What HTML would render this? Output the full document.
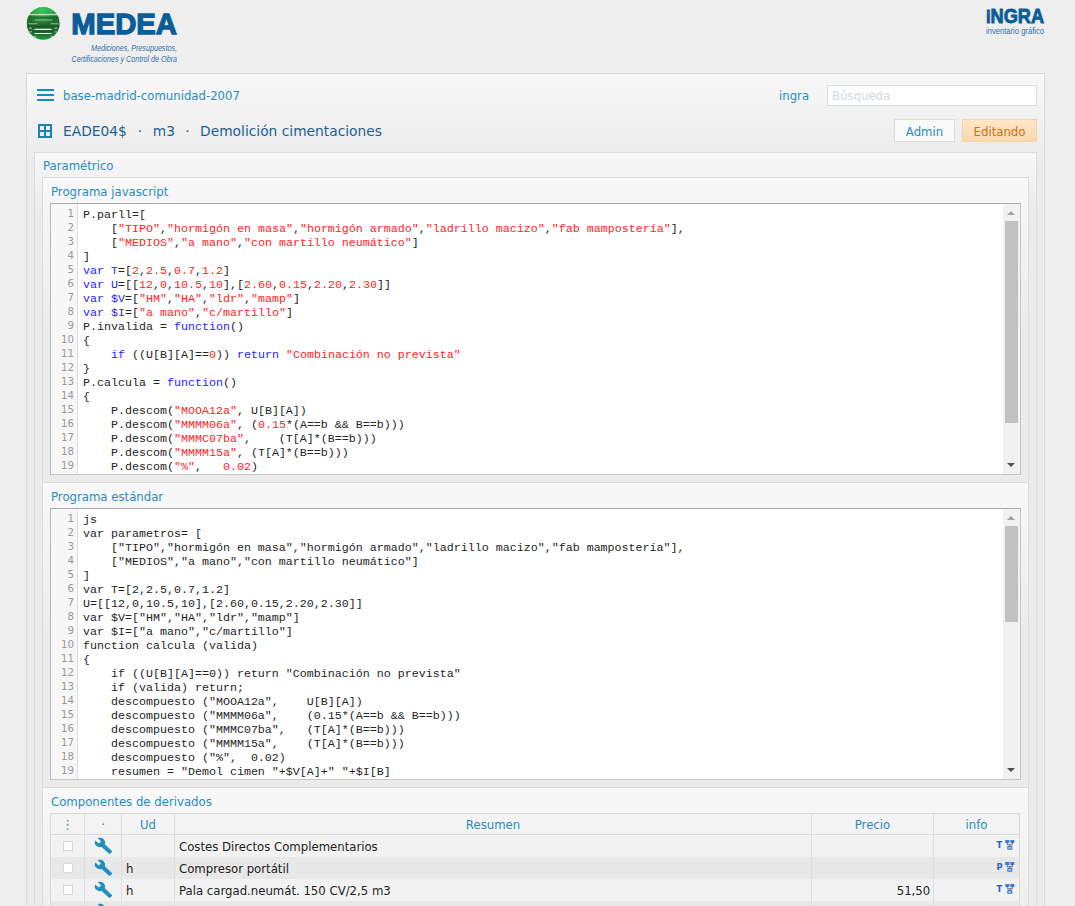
<!DOCTYPE html>
<html lang="es"><head><meta charset="utf-8"><title>MEDEA</title>
<style>
*{box-sizing:border-box}
html,body{margin:0;padding:0}
body{width:1075px;height:906px;overflow:hidden;background:#eeeeee;position:relative;font-family:"DejaVu Sans","Liberation Sans",sans-serif;font-size:13px;color:#222}
i{font-style:normal}
.abs{position:absolute}
#main{position:absolute;left:26px;top:73px;width:1019px;height:900px;border:1px solid #dadada;background:#ebebeb linear-gradient(#f8f8f8,#ebebeb) no-repeat;background-size:100% 85px}
#param{position:absolute;left:34px;top:152px;width:1003px;height:900px;border:1px solid #dcdcdc;background:#ebebeb linear-gradient(#f7f7f7,#ebebeb) no-repeat;background-size:100% 60px}
.fs{position:absolute;left:42px;width:987px;height:306px;border:1px solid #dcdcdc;border-bottom:none;background:#ebebeb linear-gradient(#f8f8f8,#ebebeb) no-repeat;background-size:100% 150px}
.lbl{position:absolute;color:#2a8cbc;white-space:nowrap;line-height:16px;transform:scaleX(.9);transform-origin:0 50%}
.lbl.c{text-align:center;transform-origin:50% 50%}
.ed{position:absolute;left:50px;width:971px;height:272px;background:#fff;border:1px solid #c6c6c6;border-top-color:#ababab;border-left-color:#b8b8b8;overflow:hidden}
.gut{position:absolute;left:0;top:0;width:27px;height:270px;background:#f7f7f7;border-right:1px solid #dddddd;padding-top:3px;text-align:right;padding-right:3px;color:#999;font-size:11px;line-height:14px}
.gut div{height:14px;transform:scaleX(.93);transform-origin:100% 50%}
.code{position:absolute;left:32px;top:4px;margin:0;font-family:"Liberation Mono",monospace;font-size:11.67px;line-height:14px;color:#242424;white-space:pre}
.code .s{color:#ff2424}
.code .k{color:#2424ff}
.code .d{color:#2424ff}
.sb{position:absolute;right:0;top:0;width:17px;height:270px;background:#f1f1f1}
.th{position:absolute;left:2px;top:17px;width:13px;background:#c1c1c1}
.au{position:absolute;left:4px;top:6.500px;width:0;height:0;border-left:4px solid transparent;border-right:4px solid transparent;border-bottom:4.500px solid #a3a3a3}
.ad{position:absolute;left:4px;bottom:7.500px;width:0;height:0;border-left:4px solid transparent;border-right:4px solid transparent;border-top:4.500px solid #505050}
#tbl{position:absolute;left:50px;top:813px;width:970px;height:100px;border:1px solid #d8d8d8;border-bottom:none;background:#f3f3f3}
.hd{position:absolute;top:815px;height:20px;line-height:20px;color:#2a8cbc;text-align:center;white-space:nowrap;transform:scaleX(.9)}
.vl{position:absolute;top:814px;width:1px;height:100px;background:#dedede}
.row{position:absolute;left:51px;width:968px;height:22px;line-height:22px;white-space:nowrap}
.r0{background:#f2f2f2}
.r1{background:#e8e8e8}
.cb{position:absolute;left:12px;top:6px;width:10px;height:10px;background:#fff;border:1px solid #d9d9d9}
.wr{position:absolute;left:42.900px;top:2.100px;width:19px;height:17.600px;fill:#2090c0}
.ud{position:absolute;left:75px;top:1px;transform:scaleX(.9);transform-origin:0 50%}
.res{position:absolute;left:128px;top:1px;transform:scaleX(.9);transform-origin:0 50%}
.pr{position:absolute;right:89px;top:1px;transform:scaleX(.9);transform-origin:100% 50%}
.ty{position:absolute;left:944.500px;top:-1px;font-weight:bold;font-size:9.500px;color:#2a5fc0;transform:scaleX(.88);transform-origin:50% 50%}
.tr{position:absolute;left:954px;top:5px;width:10px;height:10px}
.vl2{position:absolute;top:0;width:1px;height:22px;background:#dedede}
</style></head><body>

<!-- MEDEA logo -->
<svg class="abs" style="left:20px;top:0" width="180" height="70" viewBox="0 0 180 70">
<defs>
<linearGradient id="gg" x1="0" y1="0" x2="0" y2="1"><stop offset="0" stop-color="#2fae4a"/><stop offset="0.220" stop-color="#27a043"/><stop offset="0.260" stop-color="#1f7a32"/><stop offset="0.550" stop-color="#1d682b"/><stop offset="0.850" stop-color="#1f7430"/><stop offset="1" stop-color="#2a9a42"/></linearGradient>
<radialGradient id="gh" cx="0.450" cy="0.180" r="0.400"><stop offset="0" stop-color="#4cc765" stop-opacity="0.700"/><stop offset="1" stop-color="#4cc765" stop-opacity="0"/></radialGradient>
<clipPath id="gc"><circle cx="23.200" cy="23.400" r="16.400"/></clipPath>
</defs>
<circle cx="23.200" cy="23.400" r="16.400" fill="url(#gg)"/>
<circle cx="23.200" cy="23.400" r="16.400" fill="url(#gh)"/>
<g clip-path="url(#gc)" stroke-linecap="round" fill="none">
<path d="M6 17.600h35" stroke="#195c26" stroke-width="1.600" opacity="0.700"/>
<path d="M6 26.500h35" stroke="#17531f" stroke-width="2.200" opacity="0.800"/>
<path d="M6 31.500h35" stroke="#17531f" stroke-width="1.400" opacity="0.700"/>
<path d="M6 14.700h35" stroke="#f4f8f4" stroke-width="0.900"/>
<path d="M15 20h17" stroke="#86c391" stroke-width="0.900"/>
<path d="M9 23.800h8M31 23.800h7" stroke="#b9dcc0" stroke-width="0.800"/>
<path d="M15 29.400h16" stroke="#eaf4ec" stroke-width="1.100"/>
<path d="M9.500 28h2M9.500 31.800h2M35 28h2M35 31.800h2" stroke="#cfe6d3" stroke-width="0.800"/>
<path d="M15 33.500h16" stroke="#eaf4ec" stroke-width="1"/>
<path d="M13 36.800h3M31 36.800h3" stroke="#cfe6d3" stroke-width="0.800"/>
</g>
<text x="51.300" y="34.350" font-family="Liberation Sans, sans-serif" font-weight="bold" font-size="29.700" fill="#0b5d98" stroke="#0b5d98" stroke-width="1.300" textLength="105.600" lengthAdjust="spacingAndGlyphs">MEDEA</text>
<text x="71" y="51.300" font-family="Liberation Sans, sans-serif" font-style="italic" font-size="8.600" fill="#2f72a8" textLength="86" lengthAdjust="spacingAndGlyphs">Mediciones, Presupuestos,</text>
<text x="51.500" y="62" font-family="Liberation Sans, sans-serif" font-style="italic" font-size="8.600" fill="#2f72a8" textLength="105.500" lengthAdjust="spacingAndGlyphs">Certificaciones y Control de Obra</text>
</svg>

<!-- INGRA logo -->
<svg class="abs" style="left:980px;top:0" width="70" height="42" viewBox="0 0 70 42">
<text x="6" y="23" font-family="Liberation Sans, sans-serif" font-weight="bold" font-size="20" fill="#0b5d98" stroke="#0b5d98" stroke-width="0.900" textLength="58" lengthAdjust="spacingAndGlyphs"><tspan font-size="18.200">i</tspan>NGRA</text>
<text x="6" y="34" font-family="Liberation Sans, sans-serif" font-size="9.300" fill="#2f70a6" textLength="58" lengthAdjust="spacingAndGlyphs">inventario gráfico</text>
</svg>

<div class="abs" style="left:1074px;top:0;width:1px;height:906px;background:#f1f1f1"></div>
<div id="main"></div>

<!-- toolbar -->
<div class="abs" style="left:37px;top:89px;width:17px;height:2px;background:#1e8aba;box-shadow:0 5px 0 #1e8aba,0 10px 0 #1e8aba"></div>
<div class="lbl" style="left:63px;top:88px">base-madrid-comunidad-2007</div>
<div class="lbl" style="left:779px;top:88px">ingra</div>
<div class="abs" style="left:827px;top:85px;width:210px;height:21px;background:#fff;border:1px solid #dcdcdc"></div>
<div class="lbl" style="left:832px;top:88px;color:#d3d9e0">Búsqueda</div>

<svg class="abs" style="left:38px;top:124px" width="14" height="14" viewBox="0 0 14 14"><path d="M1 1h12v12H1zM7 1v12M1 7h12" fill="none" stroke="#1c82b4" stroke-width="2"/></svg>
<div class="abs" style="left:63px;top:121px;font-size:13.800px;line-height:20px;color:#1d5f94;white-space:nowrap"><span>EADE04$</span><span style="display:inline-block;width:26px;text-align:center">·</span><span>m3</span><span style="display:inline-block;width:25px;text-align:center">·</span><span>Demolición cimentaciones</span></div>

<div class="abs" style="left:894px;top:119px;width:61px;height:23px;border:1px solid #dcdcdc;background:#f9f9f9"></div>
<div class="lbl c" style="left:894px;top:124px;width:61px">Admin</div>
<div class="abs" style="left:962px;top:119px;width:75px;height:23px;border:1px solid #f3d3b0;background:linear-gradient(#fee6c8,#fbd9ad)"></div>
<div class="lbl c" style="left:962px;top:124px;width:75px;color:#c8701e">Editando</div>

<div id="param"></div>
<div class="lbl" style="left:43px;top:158px">Paramétrico</div>

<div class="fs" style="top:177px"></div>
<div class="lbl" style="left:51px;top:184px">Programa javascript</div>
<div class="ed" style="top:203px">
<div class="gut"><div>1</div><div>2</div><div>3</div><div>4</div><div>5</div><div>6</div><div>7</div><div>8</div><div>9</div><div>10</div><div>11</div><div>12</div><div>13</div><div>14</div><div>15</div><div>16</div><div>17</div><div>18</div><div>19</div></div>
<pre class="code">P.parll=[
    [<i class="s">"TIPO"</i>,<i class="s">"hormigón en masa"</i>,<i class="s">"hormigón armado"</i>,<i class="s">"ladrillo macizo"</i>,<i class="s">"fab mampostería"</i>],
    [<i class="s">"MEDIOS"</i>,<i class="s">"a mano"</i>,<i class="s">"con martillo neumático"</i>]
]
<i class="k">var</i> <i class="d">T</i>=[<i class="s">2</i>,<i class="s">2.5</i>,<i class="s">0.7</i>,<i class="s">1.2</i>]
<i class="k">var</i> <i class="d">U</i>=[[<i class="s">12</i>,<i class="s">0</i>,<i class="s">10.5</i>,<i class="s">10</i>],[<i class="s">2.60</i>,<i class="s">0.15</i>,<i class="s">2.20</i>,<i class="s">2.30</i>]]
<i class="k">var</i> <i class="d">$V</i>=[<i class="s">"HM"</i>,<i class="s">"HA"</i>,<i class="s">"ldr"</i>,<i class="s">"mamp"</i>]
<i class="k">var</i> <i class="d">$I</i>=[<i class="s">"a mano"</i>,<i class="s">"c/martillo"</i>]
P.invalida = <i class="k">function</i>()
{
    <i class="k">if</i> ((U[B][A]==<i class="s">0</i>)) <i class="k">return</i> <i class="s">"Combinación no prevista"</i>
}
P.calcula = <i class="k">function</i>()
{
    P.descom(<i class="s">"MOOA12a"</i>, U[B][A])
    P.descom(<i class="s">"MMMM06a"</i>, (<i class="s">0.15</i>*(A==b &amp;&amp; B==b)))
    P.descom(<i class="s">"MMMC07ba"</i>,    (T[A]*(B==b)))
    P.descom(<i class="s">"MMMM15a"</i>, (T[A]*(B==b)))
    P.descom(<i class="s">"%"</i>,   <i class="s">0.02</i>)</pre>
<div class="sb"><div class="au"></div><div class="th" style="height:202px"></div><div class="ad"></div></div>
</div>

<div class="fs" style="top:482px"></div>
<div class="lbl" style="left:51px;top:489px">Programa estándar</div>
<div class="ed" style="top:508px">
<div class="gut"><div>1</div><div>2</div><div>3</div><div>4</div><div>5</div><div>6</div><div>7</div><div>8</div><div>9</div><div>10</div><div>11</div><div>12</div><div>13</div><div>14</div><div>15</div><div>16</div><div>17</div><div>18</div><div>19</div></div>
<pre class="code">js
var parametros= [
    ["TIPO","hormigón en masa","hormigón armado","ladrillo macizo","fab mampostería"],
    ["MEDIOS","a mano","con martillo neumático"]
]
var T=[2,2.5,0.7,1.2]
U=[[12,0,10.5,10],[2.60,0.15,2.20,2.30]]
var $V=["HM","HA","ldr","mamp"]
var $I=["a mano","c/martillo"]
function calcula (valida)
{
    if ((U[B][A]==0)) return "Combinación no prevista"
    if (valida) return;
    descompuesto ("MOOA12a",    U[B][A])
    descompuesto ("MMMM06a",    (0.15*(A==b &amp;&amp; B==b)))
    descompuesto ("MMMC07ba",   (T[A]*(B==b)))
    descompuesto ("MMMM15a",    (T[A]*(B==b)))
    descompuesto ("%",  0.02)
    resumen = "Demol cimen "+$V[A]+" "+$I[B]</pre>
<div class="sb"><div class="au"></div><div class="th" style="height:96px"></div><div class="ad"></div></div>
</div>

<div class="fs" style="top:787px"></div>
<div class="lbl" style="left:51px;top:794px">Componentes de derivados</div>
<div id="tbl"></div>
<div class="hd" style="left:51px;width:33px">⋮</div>
<div class="hd" style="left:85px;width:36px">·</div>
<div class="hd" style="left:122px;width:52px">Ud</div>
<div class="hd" style="left:175px;width:636px">Resumen</div>
<div class="hd" style="left:812px;width:121px">Precio</div>
<div class="hd" style="left:934px;width:85px">info</div>
<div class="abs" style="left:51px;top:834px;width:968px;height:1px;background:#dcdcdc"></div>
<div class="row r0" style="top:835px"><span class="cb"></span><svg class="wr" viewBox="0 0 24 24" preserveAspectRatio="none"><path d="M22.7 19l-9.1-9.1c.9-2.3.4-5-1.500-6.900-2-2-5-2.400-7.400-1.300L9 6 6 9 1.600 4.700C.4 7.100.9 10.100 2.900 12.100c1.900 1.900 4.600 2.400 6.900 1.500l9.100 9.100c.4.4 1 .4 1.400 0l2.300-2.300c.5-.4.5-1.100.1-1.400z"/></svg><span class="ud"></span><span class="res">Costes Directos Complementarios</span><span class="pr"></span><span class="ty">T</span><svg class="tr" viewBox="0 0 10 10"><rect x="0.300" y="0" width="4" height="3" rx=".5" fill="#3b78d8"/><rect x="5.300" y="0" width="4" height="3" rx=".5" fill="#3b78d8"/><path d="M2.300 3v1.800h5V3M4.800 4.800v1.500" stroke="#5a6a80" stroke-width="1" fill="none"/><rect x="2.300" y="6" width="5" height="3.800" rx=".5" fill="#3b78d8"/><rect x="3.300" y="7.200" width="3" height="1.400" fill="#bcd3f5"/></svg></div>
<div class="row r1" style="top:857px"><span class="cb"></span><svg class="wr" viewBox="0 0 24 24" preserveAspectRatio="none"><path d="M22.7 19l-9.1-9.1c.9-2.3.4-5-1.500-6.900-2-2-5-2.400-7.400-1.300L9 6 6 9 1.600 4.700C.4 7.100.9 10.100 2.900 12.100c1.900 1.900 4.600 2.400 6.900 1.500l9.100 9.100c.4.4 1 .4 1.400 0l2.300-2.300c.5-.4.5-1.100.1-1.400z"/></svg><span class="ud">h</span><span class="res">Compresor portátil</span><span class="pr"></span><span class="ty">P</span><svg class="tr" viewBox="0 0 10 10"><rect x="0.300" y="0" width="4" height="3" rx=".5" fill="#3b78d8"/><rect x="5.300" y="0" width="4" height="3" rx=".5" fill="#3b78d8"/><path d="M2.300 3v1.800h5V3M4.800 4.800v1.500" stroke="#5a6a80" stroke-width="1" fill="none"/><rect x="2.300" y="6" width="5" height="3.800" rx=".5" fill="#3b78d8"/><rect x="3.300" y="7.200" width="3" height="1.400" fill="#bcd3f5"/></svg></div>
<div class="row r0" style="top:879px"><span class="cb"></span><svg class="wr" viewBox="0 0 24 24" preserveAspectRatio="none"><path d="M22.7 19l-9.1-9.1c.9-2.3.4-5-1.500-6.900-2-2-5-2.400-7.400-1.300L9 6 6 9 1.600 4.700C.4 7.100.9 10.100 2.900 12.100c1.900 1.900 4.600 2.400 6.900 1.500l9.100 9.100c.4.4 1 .4 1.400 0l2.300-2.300c.5-.4.5-1.100.1-1.400z"/></svg><span class="ud">h</span><span class="res">Pala cargad.neumát. 150 CV/2,5 m3</span><span class="pr">51,50</span><span class="ty">T</span><svg class="tr" viewBox="0 0 10 10"><rect x="0.300" y="0" width="4" height="3" rx=".5" fill="#3b78d8"/><rect x="5.300" y="0" width="4" height="3" rx=".5" fill="#3b78d8"/><path d="M2.300 3v1.800h5V3M4.800 4.800v1.500" stroke="#5a6a80" stroke-width="1" fill="none"/><rect x="2.300" y="6" width="5" height="3.800" rx=".5" fill="#3b78d8"/><rect x="3.300" y="7.200" width="3" height="1.400" fill="#bcd3f5"/></svg></div>
<div class="row r1" style="top:901px"><span class="cb"></span><svg class="wr" viewBox="0 0 24 24" preserveAspectRatio="none"><path d="M22.7 19l-9.1-9.1c.9-2.3.4-5-1.500-6.900-2-2-5-2.400-7.400-1.300L9 6 6 9 1.600 4.700C.4 7.100.9 10.100 2.900 12.100c1.900 1.900 4.600 2.400 6.900 1.500l9.100 9.100c.4.4 1 .4 1.400 0l2.300-2.300c.5-.4.5-1.100.1-1.400z"/></svg><span class="ud">h</span><span class="res">Martillo manual picador neumático 9 kg</span><span class="pr"></span><span class="ty">T</span><svg class="tr" viewBox="0 0 10 10"><rect x="0.300" y="0" width="4" height="3" rx=".5" fill="#3b78d8"/><rect x="5.300" y="0" width="4" height="3" rx=".5" fill="#3b78d8"/><path d="M2.300 3v1.800h5V3M4.800 4.800v1.500" stroke="#5a6a80" stroke-width="1" fill="none"/><rect x="2.300" y="6" width="5" height="3.800" rx=".5" fill="#3b78d8"/><rect x="3.300" y="7.200" width="3" height="1.400" fill="#bcd3f5"/></svg></div>

<div class="vl" style="left:84px"></div>
<div class="vl" style="left:121px"></div>
<div class="vl" style="left:174px"></div>
<div class="vl" style="left:811px"></div>
<div class="vl" style="left:933px"></div>
</body></html>
